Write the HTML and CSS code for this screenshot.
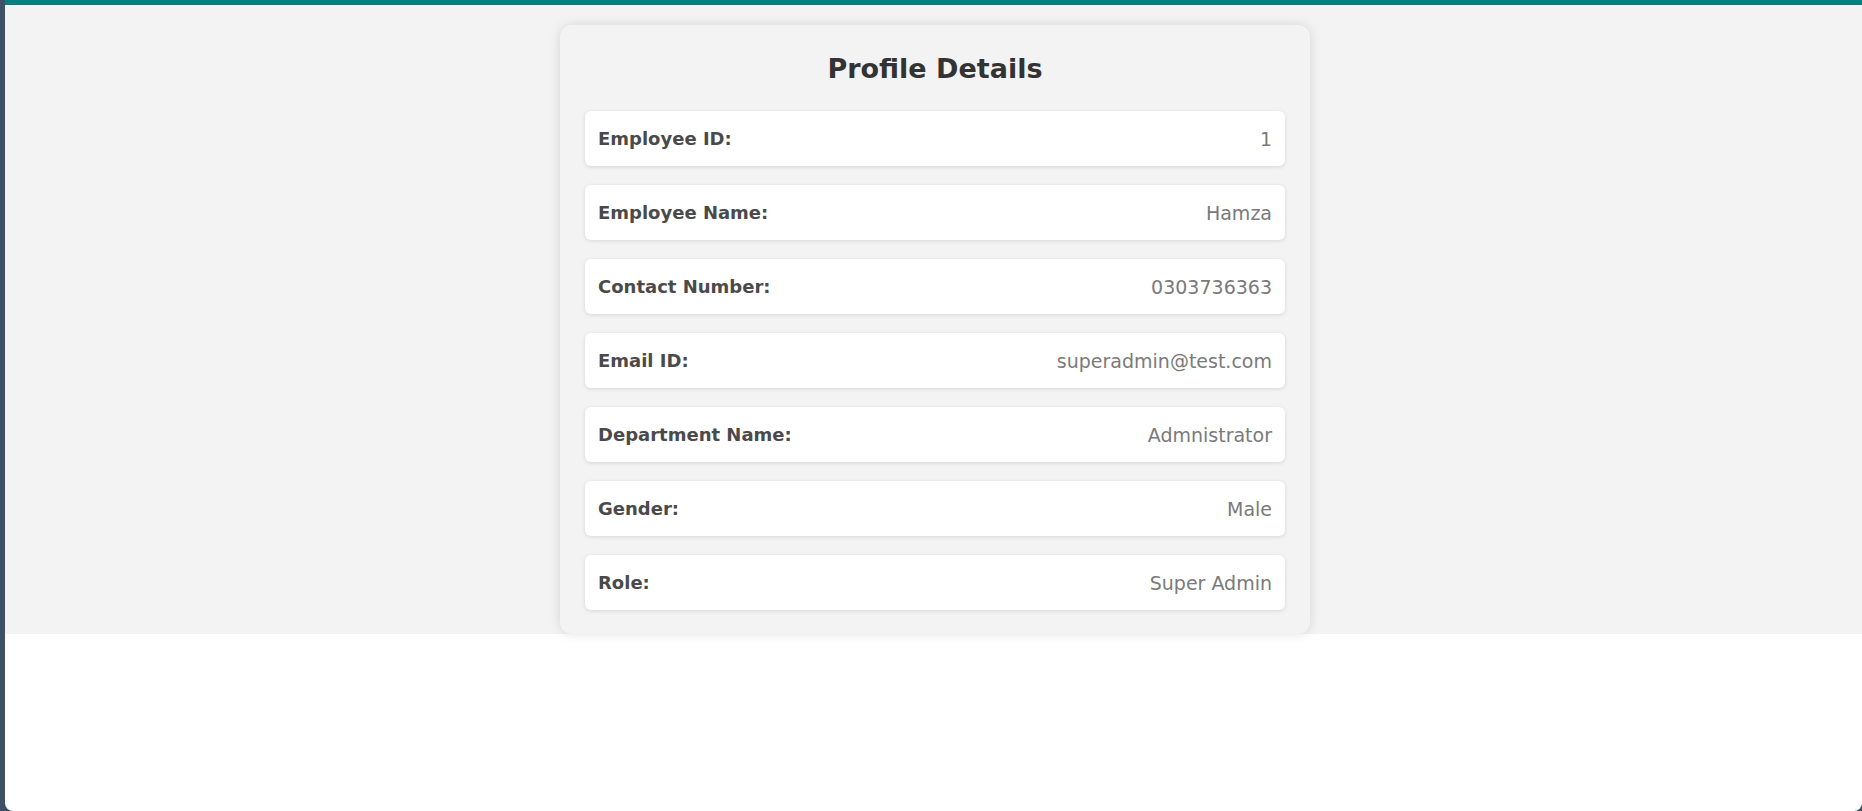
FILE: index.html
```html
<!DOCTYPE html>
<html lang="en">
<head>
<meta charset="utf-8">
<title>Profile Details</title>
<link rel="stylesheet" href="styles.css">
</head>
<body>
<div class="app">
  <main class="main">
    <div class="topbar"></div>
    <section class="content">
      <div class="card">
        <h1 class="title">Profile Details</h1>
        <div class="rows">
          <div class="row"><span class="label">Employee ID:</span><span class="value">1</span></div>
          <div class="row"><span class="label">Employee Name:</span><span class="value">Hamza</span></div>
          <div class="row"><span class="label">Contact Number:</span><span class="value">0303736363</span></div>
          <div class="row"><span class="label">Email ID:</span><span class="value">superadmin@test.com</span></div>
          <div class="row"><span class="label">Department Name:</span><span class="value">Admnistrator</span></div>
          <div class="row"><span class="label">Gender:</span><span class="value">Male</span></div>
          <div class="row"><span class="label">Role:</span><span class="value">Super Admin</span></div>
        </div>
      </div>
    </section>
  </main>
</div>
</body>
</html>
```
FILE: styles.css
```css
html, body {
  margin: 0;
  padding: 0;
  height: 100%;
}
body {
  background: #3e5066;
  font-family: "DejaVu Sans", Verdana, sans-serif;
}
.app {
  display: flex;
  height: 811px;
  padding-left: 5px;
  box-sizing: border-box;
}
.main {
  flex: 1;
  background: #ffffff;
  border-radius: 0 0 8px 8px;
  overflow: hidden;
  display: flex;
  flex-direction: column;
}
.topbar {
  height: 5px;
  background: #008080;
  flex: none;
}
.content {
  background: #f3f3f3;
  padding: 20px 0 0 3px;
  display: flex;
  justify-content: center;
  align-items: flex-start;
}
.card {
  width: 750px;
  box-sizing: border-box;
  background: #f3f3f3;
  border-radius: 12px;
  box-shadow: 0 0 12px rgba(0, 0, 0, 0.12);
  padding: 25px 25px 24px;
}
.title {
  margin: 0 0 23px;
  text-align: center;
  font-size: 27px;
  line-height: 38px;
  font-weight: bold;
  color: #333333;
}
.rows {
  display: flex;
  flex-direction: column;
  gap: 19px;
}
.row {
  display: flex;
  justify-content: space-between;
  align-items: center;
  height: 55px;
  box-sizing: border-box;
  padding: 0 13px 0 13px;
  background: #ffffff;
  border-radius: 6px;
  box-shadow: 0 1px 4px rgba(0, 0, 0, 0.12);
  font-size: 18px;
}
.label {
  font-weight: bold;
  color: #4a4a4a;
}
.value {
  font-size: 19px;
  color: #7a7a7a;
}
```
